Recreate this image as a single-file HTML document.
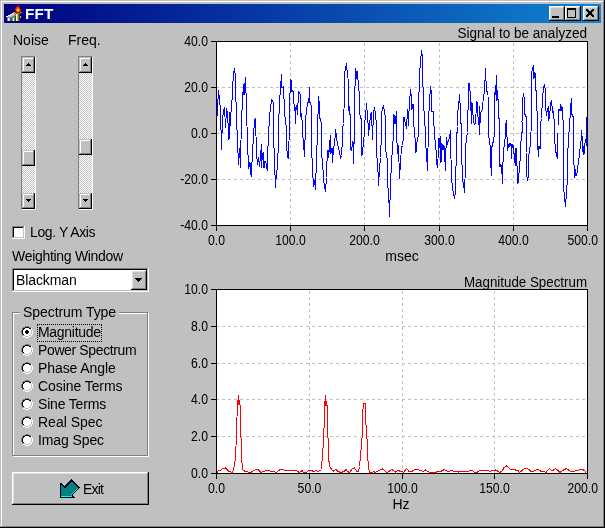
<!DOCTYPE html>
<html><head><meta charset="utf-8"><title>FFT</title>
<style>
html,body{margin:0;padding:0;background:#c0c0c0;}
body{width:605px;height:528px;position:relative;overflow:hidden;font-family:"Liberation Sans",sans-serif;font-size:14px;color:#000;}
.a{position:absolute;}
#root{position:absolute;left:0;top:0;width:605px;height:528px;will-change:transform;}
.t{position:absolute;white-space:nowrap;line-height:16px;height:16px;}
.win{position:absolute;left:0;top:0;width:605px;height:528px;box-sizing:border-box;background:#c0c0c0;
 box-shadow:inset -1px -1px 0 #000,inset 1px 1px 0 #c0c0c0,inset -2px -2px 0 #808080,inset 2px 2px 0 #fff;}
.title{position:absolute;left:4px;top:4px;width:597px;height:19px;background:linear-gradient(to right,#000080,#1084d0);}
.title .cap{position:absolute;left:21px;top:2px;color:#fff;font-weight:bold;font-size:14px;letter-spacing:0.2px;display:inline-block;transform:scaleX(1.09);transform-origin:0 0;line-height:16px;white-space:nowrap;}
.btn{position:absolute;box-sizing:border-box;background:#c0c0c0;
 box-shadow:inset -1px -1px 0 #000,inset 1px 1px 0 #fff,inset -2px -2px 0 #808080,inset 2px 2px 0 #dfdfdf;}
.sbtn{position:absolute;box-sizing:border-box;background:#c0c0c0;
 box-shadow:inset -1px -1px 0 #000,inset 1px 1px 0 #c0c0c0,inset -2px -2px 0 #808080,inset 2px 2px 0 #fff;}
.sb{position:absolute;width:15px;height:154px;box-sizing:border-box;border:1px solid;border-color:#808080 #fff #fff #808080;
 background-color:#c0c0c0;background-image:linear-gradient(45deg,#fff 25%,transparent 25%,transparent 75%,#fff 75%),linear-gradient(45deg,#fff 25%,transparent 25%,transparent 75%,#fff 75%);background-size:2px 2px;background-position:0 0,1px 1px;}
.sunk{position:absolute;box-sizing:border-box;background:#fff;
 box-shadow:inset -1px -1px 0 #fff,inset 1px 1px 0 #808080,inset -2px -2px 0 #c0c0c0,inset 2px 2px 0 #000;}
.grp{position:absolute;box-sizing:border-box;border:1px solid #808080;box-shadow:1px 1px 0 #fff, inset 1px 1px 0 #fff;}
.radio{position:absolute;width:12px;height:12px;}
svg{position:absolute;left:0;top:0;}
svg text{font-family:"Liberation Sans",sans-serif;font-size:14px;fill:#000;}
</style></head>
<body>
<div id="root">
<div class="win"></div>
<svg class="a" style="left:6px;top:5px;z-index:3" width="16" height="16" shape-rendering="crispEdges"><rect x="12" y="0" width="1" height="1" fill="#ff0000"/><rect x="11" y="1" width="2" height="1" fill="#ff0000"/><rect x="10" y="2" width="1" height="1" fill="#ff0000"/><rect x="11" y="2" width="1" height="1" fill="#ff8000"/><rect x="12" y="2" width="2" height="1" fill="#ff0000"/><rect x="9" y="3" width="2" height="1" fill="#ff0000"/><rect x="11" y="3" width="2" height="1" fill="#ff8000"/><rect x="13" y="3" width="1" height="1" fill="#ff0000"/><rect x="9" y="4" width="1" height="1" fill="#ff0000"/><rect x="10" y="4" width="1" height="1" fill="#ff8000"/><rect x="11" y="4" width="1" height="1" fill="#ffff00"/><rect x="12" y="4" width="2" height="1" fill="#ff8000"/><rect x="14" y="4" width="1" height="1" fill="#ff0000"/><rect x="9" y="5" width="1" height="1" fill="#ff0000"/><rect x="10" y="5" width="1" height="1" fill="#ff8000"/><rect x="11" y="5" width="2" height="1" fill="#ffff00"/><rect x="13" y="5" width="1" height="1" fill="#ff8000"/><rect x="14" y="5" width="1" height="1" fill="#ff0000"/><rect x="9" y="6" width="1" height="1" fill="#800000"/><rect x="10" y="6" width="1" height="1" fill="#ff0000"/><rect x="11" y="6" width="2" height="1" fill="#ff8000"/><rect x="13" y="6" width="1" height="1" fill="#ff0000"/><rect x="14" y="6" width="1" height="1" fill="#800000"/><rect x="7" y="7" width="1" height="1" fill="#808080"/><rect x="8" y="7" width="1" height="1" fill="#c0c080"/><rect x="9" y="7" width="2" height="1" fill="#800000"/><rect x="11" y="7" width="2" height="1" fill="#ff0000"/><rect x="13" y="7" width="1" height="1" fill="#800000"/><rect x="14" y="7" width="1" height="1" fill="#c0c080"/><rect x="15" y="7" width="1" height="1" fill="#808000"/><rect x="6" y="8" width="2" height="1" fill="#ffffff"/><rect x="8" y="8" width="1" height="1" fill="#808000"/><rect x="9" y="8" width="1" height="1" fill="#c0c080"/><rect x="10" y="8" width="4" height="1" fill="#808000"/><rect x="14" y="8" width="1" height="1" fill="#404000"/><rect x="4" y="9" width="2" height="1" fill="#ffffff"/><rect x="6" y="9" width="3" height="1" fill="#c0c0c0"/><rect x="9" y="9" width="1" height="1" fill="#808080"/><rect x="10" y="9" width="1" height="1" fill="#ffffff"/><rect x="11" y="9" width="1" height="1" fill="#c0c080"/><rect x="12" y="9" width="1" height="1" fill="#808000"/><rect x="13" y="9" width="1" height="1" fill="#404000"/><rect x="2" y="10" width="2" height="1" fill="#ffffff"/><rect x="4" y="10" width="4" height="1" fill="#c0c0c0"/><rect x="8" y="10" width="2" height="1" fill="#808080"/><rect x="10" y="10" width="1" height="1" fill="#ffffff"/><rect x="11" y="10" width="1" height="1" fill="#c0c080"/><rect x="12" y="10" width="1" height="1" fill="#808000"/><rect x="13" y="10" width="1" height="1" fill="#404000"/><rect x="0" y="11" width="2" height="1" fill="#ffffff"/><rect x="2" y="11" width="4" height="1" fill="#c0c0c0"/><rect x="6" y="11" width="3" height="1" fill="#808080"/><rect x="9" y="11" width="1" height="1" fill="#404000"/><rect x="10" y="11" width="1" height="1" fill="#ffffff"/><rect x="11" y="11" width="1" height="1" fill="#c0c080"/><rect x="12" y="11" width="1" height="1" fill="#808000"/><rect x="13" y="11" width="1" height="1" fill="#404000"/><rect x="14" y="11" width="1" height="1" fill="#c0c080"/><rect x="1" y="12" width="8" height="1" fill="#808080"/><rect x="9" y="12" width="1" height="1" fill="#404000"/><rect x="10" y="12" width="1" height="1" fill="#ffffff"/><rect x="11" y="12" width="1" height="1" fill="#c0c080"/><rect x="12" y="12" width="1" height="1" fill="#808000"/><rect x="13" y="12" width="1" height="1" fill="#404000"/><rect x="14" y="12" width="1" height="1" fill="#c0c080"/><rect x="1" y="13" width="1" height="1" fill="#808080"/><rect x="2" y="13" width="1" height="1" fill="#ffffff"/><rect x="3" y="13" width="1" height="1" fill="#c0c0c0"/><rect x="4" y="13" width="2" height="1" fill="#008080"/><rect x="6" y="13" width="1" height="1" fill="#40a0a0"/><rect x="7" y="13" width="1" height="1" fill="#ffffff"/><rect x="8" y="13" width="1" height="1" fill="#808080"/><rect x="9" y="13" width="1" height="1" fill="#404000"/><rect x="10" y="13" width="1" height="1" fill="#ffffff"/><rect x="11" y="13" width="1" height="1" fill="#c0c080"/><rect x="12" y="13" width="1" height="1" fill="#808000"/><rect x="13" y="13" width="1" height="1" fill="#404000"/><rect x="1" y="14" width="1" height="1" fill="#808080"/><rect x="2" y="14" width="1" height="1" fill="#ffffff"/><rect x="3" y="14" width="1" height="1" fill="#c0c0c0"/><rect x="4" y="14" width="2" height="1" fill="#008080"/><rect x="6" y="14" width="1" height="1" fill="#40a0a0"/><rect x="7" y="14" width="1" height="1" fill="#ffffff"/><rect x="8" y="14" width="1" height="1" fill="#808080"/><rect x="9" y="14" width="1" height="1" fill="#404000"/><rect x="10" y="14" width="1" height="1" fill="#ffffff"/><rect x="11" y="14" width="1" height="1" fill="#c0c080"/><rect x="12" y="14" width="1" height="1" fill="#808000"/><rect x="13" y="14" width="1" height="1" fill="#404000"/><rect x="1" y="15" width="1" height="1" fill="#808080"/><rect x="2" y="15" width="1" height="1" fill="#ffffff"/><rect x="3" y="15" width="1" height="1" fill="#c0c0c0"/><rect x="4" y="15" width="2" height="1" fill="#008080"/><rect x="6" y="15" width="1" height="1" fill="#40a0a0"/><rect x="7" y="15" width="1" height="1" fill="#ffffff"/><rect x="8" y="15" width="1" height="1" fill="#808080"/><rect x="9" y="15" width="1" height="1" fill="#404000"/><rect x="10" y="15" width="1" height="1" fill="#ffffff"/><rect x="11" y="15" width="1" height="1" fill="#c0c080"/><rect x="12" y="15" width="1" height="1" fill="#808000"/><rect x="13" y="15" width="1" height="1" fill="#404000"/></svg>
<div class="title"><span class="cap">FFT</span></div>
<div class="btn" style="left:549px;top:6px;width:16px;height:15px"><div class="a" style="left:3px;top:10px;width:7px;height:2px;background:#000"></div></div>
<div class="btn" style="left:565px;top:6px;width:16px;height:15px"><div class="a" style="left:2px;top:2px;width:9px;height:10px;box-sizing:border-box;border:1px solid #000;border-top-width:2px"></div></div>
<div class="btn" style="left:583px;top:6px;width:16px;height:15px"><svg width="16" height="15" shape-rendering="crispEdges"><rect x="3" y="3" width="2" height="1" fill="#000"/><rect x="9" y="3" width="2" height="1" fill="#000"/><rect x="3" y="4" width="3" height="1" fill="#000"/><rect x="8" y="4" width="3" height="1" fill="#000"/><rect x="4" y="5" width="6" height="1" fill="#000"/><rect x="5" y="6" width="4" height="1" fill="#000"/><rect x="5" y="7" width="4" height="1" fill="#000"/><rect x="4" y="8" width="6" height="1" fill="#000"/><rect x="3" y="9" width="3" height="1" fill="#000"/><rect x="8" y="9" width="3" height="1" fill="#000"/><rect x="3" y="10" width="2" height="1" fill="#000"/><rect x="9" y="10" width="2" height="1" fill="#000"/></svg></div>
<div class="t" id="tNoise" style="left:13px;top:32px;letter-spacing:0px;">Noise</div>
<div class="t" id="tFreq" style="left:68px;top:32px;letter-spacing:0px;">Freq.</div>
<div class="sb" style="left:21px;top:56px"></div><div class="sbtn" style="left:22px;top:57px;width:13px;height:16px"></div><div class="a" style="left:28px;top:63px;width:1px;height:1px;background:#000"></div><div class="a" style="left:27px;top:64px;width:3px;height:1px;background:#000"></div><div class="a" style="left:26px;top:65px;width:5px;height:1px;background:#000"></div><div class="sbtn" style="left:22px;top:150px;width:13px;height:16px"></div><div class="sbtn" style="left:22px;top:193px;width:13px;height:16px"></div><div class="a" style="left:26px;top:199px;width:5px;height:1px;background:#000"></div><div class="a" style="left:27px;top:200px;width:3px;height:1px;background:#000"></div><div class="a" style="left:28px;top:201px;width:1px;height:1px;background:#000"></div>
<div class="sb" style="left:78px;top:56px"></div><div class="sbtn" style="left:79px;top:57px;width:13px;height:16px"></div><div class="a" style="left:85px;top:63px;width:1px;height:1px;background:#000"></div><div class="a" style="left:84px;top:64px;width:3px;height:1px;background:#000"></div><div class="a" style="left:83px;top:65px;width:5px;height:1px;background:#000"></div><div class="sbtn" style="left:79px;top:139px;width:13px;height:16px"></div><div class="sbtn" style="left:79px;top:193px;width:13px;height:16px"></div><div class="a" style="left:83px;top:199px;width:5px;height:1px;background:#000"></div><div class="a" style="left:84px;top:200px;width:3px;height:1px;background:#000"></div><div class="a" style="left:85px;top:201px;width:1px;height:1px;background:#000"></div>
<div class="sunk" style="left:12px;top:226px;width:13px;height:13px"></div>
<div class="t" id="tLog" style="left:30px;top:224px;letter-spacing:-0.4px;">Log. Y Axis</div>
<div class="t" id="tWW" style="left:12px;top:248px;letter-spacing:-0.3px;">Weighting Window</div>
<div class="sunk" style="left:12px;top:268px;width:137px;height:24px"></div>
<div class="t" id="tBl" style="left:16px;top:272px;letter-spacing:-0.114px;">Blackman</div>
<div class="btn" style="left:131px;top:270px;width:16px;height:20px"></div><div class="a" style="left:135px;top:278px;width:7px;height:1px;background:#000"></div><div class="a" style="left:136px;top:279px;width:5px;height:1px;background:#000"></div><div class="a" style="left:137px;top:280px;width:3px;height:1px;background:#000"></div><div class="a" style="left:138px;top:281px;width:1px;height:1px;background:#000"></div>
<div class="grp" style="left:12px;top:312px;width:136px;height:144px"></div>
<div class="t" id="tST" style="left:20px;top:304px;letter-spacing:-0.067px;background:#c0c0c0;padding:0 3px;">Spectrum Type</div>
<svg class="radio" style="left:21px;top:326px" width="12" height="12" shape-rendering="crispEdges"><rect x="4" y="0" width="4" height="1" fill="#808080"/><rect x="2" y="1" width="2" height="1" fill="#808080"/><rect x="4" y="1" width="4" height="1" fill="#000"/><rect x="8" y="1" width="2" height="1" fill="#808080"/><rect x="1" y="2" width="1" height="1" fill="#808080"/><rect x="2" y="2" width="2" height="1" fill="#000"/><rect x="4" y="2" width="4" height="1" fill="#fff"/><rect x="8" y="2" width="2" height="1" fill="#000"/><rect x="10" y="2" width="1" height="1" fill="#fff"/><rect x="1" y="3" width="1" height="1" fill="#808080"/><rect x="2" y="3" width="1" height="1" fill="#000"/><rect x="3" y="3" width="6" height="1" fill="#fff"/><rect x="10" y="3" width="1" height="1" fill="#fff"/><rect x="0" y="4" width="1" height="1" fill="#808080"/><rect x="1" y="4" width="1" height="1" fill="#000"/><rect x="2" y="4" width="8" height="1" fill="#fff"/><rect x="11" y="4" width="1" height="1" fill="#fff"/><rect x="0" y="5" width="1" height="1" fill="#808080"/><rect x="1" y="5" width="1" height="1" fill="#000"/><rect x="2" y="5" width="8" height="1" fill="#fff"/><rect x="11" y="5" width="1" height="1" fill="#fff"/><rect x="0" y="6" width="1" height="1" fill="#808080"/><rect x="1" y="6" width="1" height="1" fill="#000"/><rect x="2" y="6" width="8" height="1" fill="#fff"/><rect x="11" y="6" width="1" height="1" fill="#fff"/><rect x="0" y="7" width="1" height="1" fill="#808080"/><rect x="1" y="7" width="1" height="1" fill="#000"/><rect x="2" y="7" width="8" height="1" fill="#fff"/><rect x="11" y="7" width="1" height="1" fill="#fff"/><rect x="1" y="8" width="1" height="1" fill="#808080"/><rect x="2" y="8" width="1" height="1" fill="#000"/><rect x="3" y="8" width="6" height="1" fill="#fff"/><rect x="10" y="8" width="1" height="1" fill="#fff"/><rect x="1" y="9" width="1" height="1" fill="#808080"/><rect x="4" y="9" width="4" height="1" fill="#fff"/><rect x="10" y="9" width="1" height="1" fill="#fff"/><rect x="2" y="10" width="2" height="1" fill="#fff"/><rect x="8" y="10" width="2" height="1" fill="#fff"/><rect x="4" y="11" width="4" height="1" fill="#fff"/><path d="M5 4h2v1h1v2h-1v1h-2v-1h-1v-2h1z" fill="#000"/></svg>
<div class="t" id="tR0" style="left:38px;top:324px;letter-spacing:-0.3px;">Magnitude</div>
<svg class="radio" style="left:21px;top:344px" width="12" height="12" shape-rendering="crispEdges"><rect x="4" y="0" width="4" height="1" fill="#808080"/><rect x="2" y="1" width="2" height="1" fill="#808080"/><rect x="4" y="1" width="4" height="1" fill="#000"/><rect x="8" y="1" width="2" height="1" fill="#808080"/><rect x="1" y="2" width="1" height="1" fill="#808080"/><rect x="2" y="2" width="2" height="1" fill="#000"/><rect x="4" y="2" width="4" height="1" fill="#fff"/><rect x="8" y="2" width="2" height="1" fill="#000"/><rect x="10" y="2" width="1" height="1" fill="#fff"/><rect x="1" y="3" width="1" height="1" fill="#808080"/><rect x="2" y="3" width="1" height="1" fill="#000"/><rect x="3" y="3" width="6" height="1" fill="#fff"/><rect x="10" y="3" width="1" height="1" fill="#fff"/><rect x="0" y="4" width="1" height="1" fill="#808080"/><rect x="1" y="4" width="1" height="1" fill="#000"/><rect x="2" y="4" width="8" height="1" fill="#fff"/><rect x="11" y="4" width="1" height="1" fill="#fff"/><rect x="0" y="5" width="1" height="1" fill="#808080"/><rect x="1" y="5" width="1" height="1" fill="#000"/><rect x="2" y="5" width="8" height="1" fill="#fff"/><rect x="11" y="5" width="1" height="1" fill="#fff"/><rect x="0" y="6" width="1" height="1" fill="#808080"/><rect x="1" y="6" width="1" height="1" fill="#000"/><rect x="2" y="6" width="8" height="1" fill="#fff"/><rect x="11" y="6" width="1" height="1" fill="#fff"/><rect x="0" y="7" width="1" height="1" fill="#808080"/><rect x="1" y="7" width="1" height="1" fill="#000"/><rect x="2" y="7" width="8" height="1" fill="#fff"/><rect x="11" y="7" width="1" height="1" fill="#fff"/><rect x="1" y="8" width="1" height="1" fill="#808080"/><rect x="2" y="8" width="1" height="1" fill="#000"/><rect x="3" y="8" width="6" height="1" fill="#fff"/><rect x="10" y="8" width="1" height="1" fill="#fff"/><rect x="1" y="9" width="1" height="1" fill="#808080"/><rect x="4" y="9" width="4" height="1" fill="#fff"/><rect x="10" y="9" width="1" height="1" fill="#fff"/><rect x="2" y="10" width="2" height="1" fill="#fff"/><rect x="8" y="10" width="2" height="1" fill="#fff"/><rect x="4" y="11" width="4" height="1" fill="#fff"/></svg>
<div class="t" id="tR1" style="left:38px;top:342px;letter-spacing:-0.37px;">Power Spectrum</div>
<svg class="radio" style="left:21px;top:362px" width="12" height="12" shape-rendering="crispEdges"><rect x="4" y="0" width="4" height="1" fill="#808080"/><rect x="2" y="1" width="2" height="1" fill="#808080"/><rect x="4" y="1" width="4" height="1" fill="#000"/><rect x="8" y="1" width="2" height="1" fill="#808080"/><rect x="1" y="2" width="1" height="1" fill="#808080"/><rect x="2" y="2" width="2" height="1" fill="#000"/><rect x="4" y="2" width="4" height="1" fill="#fff"/><rect x="8" y="2" width="2" height="1" fill="#000"/><rect x="10" y="2" width="1" height="1" fill="#fff"/><rect x="1" y="3" width="1" height="1" fill="#808080"/><rect x="2" y="3" width="1" height="1" fill="#000"/><rect x="3" y="3" width="6" height="1" fill="#fff"/><rect x="10" y="3" width="1" height="1" fill="#fff"/><rect x="0" y="4" width="1" height="1" fill="#808080"/><rect x="1" y="4" width="1" height="1" fill="#000"/><rect x="2" y="4" width="8" height="1" fill="#fff"/><rect x="11" y="4" width="1" height="1" fill="#fff"/><rect x="0" y="5" width="1" height="1" fill="#808080"/><rect x="1" y="5" width="1" height="1" fill="#000"/><rect x="2" y="5" width="8" height="1" fill="#fff"/><rect x="11" y="5" width="1" height="1" fill="#fff"/><rect x="0" y="6" width="1" height="1" fill="#808080"/><rect x="1" y="6" width="1" height="1" fill="#000"/><rect x="2" y="6" width="8" height="1" fill="#fff"/><rect x="11" y="6" width="1" height="1" fill="#fff"/><rect x="0" y="7" width="1" height="1" fill="#808080"/><rect x="1" y="7" width="1" height="1" fill="#000"/><rect x="2" y="7" width="8" height="1" fill="#fff"/><rect x="11" y="7" width="1" height="1" fill="#fff"/><rect x="1" y="8" width="1" height="1" fill="#808080"/><rect x="2" y="8" width="1" height="1" fill="#000"/><rect x="3" y="8" width="6" height="1" fill="#fff"/><rect x="10" y="8" width="1" height="1" fill="#fff"/><rect x="1" y="9" width="1" height="1" fill="#808080"/><rect x="4" y="9" width="4" height="1" fill="#fff"/><rect x="10" y="9" width="1" height="1" fill="#fff"/><rect x="2" y="10" width="2" height="1" fill="#fff"/><rect x="8" y="10" width="2" height="1" fill="#fff"/><rect x="4" y="11" width="4" height="1" fill="#fff"/></svg>
<div class="t" id="tR2" style="left:38px;top:360px;letter-spacing:-0.08px;">Phase Angle</div>
<svg class="radio" style="left:21px;top:380px" width="12" height="12" shape-rendering="crispEdges"><rect x="4" y="0" width="4" height="1" fill="#808080"/><rect x="2" y="1" width="2" height="1" fill="#808080"/><rect x="4" y="1" width="4" height="1" fill="#000"/><rect x="8" y="1" width="2" height="1" fill="#808080"/><rect x="1" y="2" width="1" height="1" fill="#808080"/><rect x="2" y="2" width="2" height="1" fill="#000"/><rect x="4" y="2" width="4" height="1" fill="#fff"/><rect x="8" y="2" width="2" height="1" fill="#000"/><rect x="10" y="2" width="1" height="1" fill="#fff"/><rect x="1" y="3" width="1" height="1" fill="#808080"/><rect x="2" y="3" width="1" height="1" fill="#000"/><rect x="3" y="3" width="6" height="1" fill="#fff"/><rect x="10" y="3" width="1" height="1" fill="#fff"/><rect x="0" y="4" width="1" height="1" fill="#808080"/><rect x="1" y="4" width="1" height="1" fill="#000"/><rect x="2" y="4" width="8" height="1" fill="#fff"/><rect x="11" y="4" width="1" height="1" fill="#fff"/><rect x="0" y="5" width="1" height="1" fill="#808080"/><rect x="1" y="5" width="1" height="1" fill="#000"/><rect x="2" y="5" width="8" height="1" fill="#fff"/><rect x="11" y="5" width="1" height="1" fill="#fff"/><rect x="0" y="6" width="1" height="1" fill="#808080"/><rect x="1" y="6" width="1" height="1" fill="#000"/><rect x="2" y="6" width="8" height="1" fill="#fff"/><rect x="11" y="6" width="1" height="1" fill="#fff"/><rect x="0" y="7" width="1" height="1" fill="#808080"/><rect x="1" y="7" width="1" height="1" fill="#000"/><rect x="2" y="7" width="8" height="1" fill="#fff"/><rect x="11" y="7" width="1" height="1" fill="#fff"/><rect x="1" y="8" width="1" height="1" fill="#808080"/><rect x="2" y="8" width="1" height="1" fill="#000"/><rect x="3" y="8" width="6" height="1" fill="#fff"/><rect x="10" y="8" width="1" height="1" fill="#fff"/><rect x="1" y="9" width="1" height="1" fill="#808080"/><rect x="4" y="9" width="4" height="1" fill="#fff"/><rect x="10" y="9" width="1" height="1" fill="#fff"/><rect x="2" y="10" width="2" height="1" fill="#fff"/><rect x="8" y="10" width="2" height="1" fill="#fff"/><rect x="4" y="11" width="4" height="1" fill="#fff"/></svg>
<div class="t" id="tR3" style="left:38px;top:378px;letter-spacing:-0.073px;">Cosine Terms</div>
<svg class="radio" style="left:21px;top:398px" width="12" height="12" shape-rendering="crispEdges"><rect x="4" y="0" width="4" height="1" fill="#808080"/><rect x="2" y="1" width="2" height="1" fill="#808080"/><rect x="4" y="1" width="4" height="1" fill="#000"/><rect x="8" y="1" width="2" height="1" fill="#808080"/><rect x="1" y="2" width="1" height="1" fill="#808080"/><rect x="2" y="2" width="2" height="1" fill="#000"/><rect x="4" y="2" width="4" height="1" fill="#fff"/><rect x="8" y="2" width="2" height="1" fill="#000"/><rect x="10" y="2" width="1" height="1" fill="#fff"/><rect x="1" y="3" width="1" height="1" fill="#808080"/><rect x="2" y="3" width="1" height="1" fill="#000"/><rect x="3" y="3" width="6" height="1" fill="#fff"/><rect x="10" y="3" width="1" height="1" fill="#fff"/><rect x="0" y="4" width="1" height="1" fill="#808080"/><rect x="1" y="4" width="1" height="1" fill="#000"/><rect x="2" y="4" width="8" height="1" fill="#fff"/><rect x="11" y="4" width="1" height="1" fill="#fff"/><rect x="0" y="5" width="1" height="1" fill="#808080"/><rect x="1" y="5" width="1" height="1" fill="#000"/><rect x="2" y="5" width="8" height="1" fill="#fff"/><rect x="11" y="5" width="1" height="1" fill="#fff"/><rect x="0" y="6" width="1" height="1" fill="#808080"/><rect x="1" y="6" width="1" height="1" fill="#000"/><rect x="2" y="6" width="8" height="1" fill="#fff"/><rect x="11" y="6" width="1" height="1" fill="#fff"/><rect x="0" y="7" width="1" height="1" fill="#808080"/><rect x="1" y="7" width="1" height="1" fill="#000"/><rect x="2" y="7" width="8" height="1" fill="#fff"/><rect x="11" y="7" width="1" height="1" fill="#fff"/><rect x="1" y="8" width="1" height="1" fill="#808080"/><rect x="2" y="8" width="1" height="1" fill="#000"/><rect x="3" y="8" width="6" height="1" fill="#fff"/><rect x="10" y="8" width="1" height="1" fill="#fff"/><rect x="1" y="9" width="1" height="1" fill="#808080"/><rect x="4" y="9" width="4" height="1" fill="#fff"/><rect x="10" y="9" width="1" height="1" fill="#fff"/><rect x="2" y="10" width="2" height="1" fill="#fff"/><rect x="8" y="10" width="2" height="1" fill="#fff"/><rect x="4" y="11" width="4" height="1" fill="#fff"/></svg>
<div class="t" id="tR4" style="left:38px;top:396px;letter-spacing:-0.178px;">Sine Terms</div>
<svg class="radio" style="left:21px;top:416px" width="12" height="12" shape-rendering="crispEdges"><rect x="4" y="0" width="4" height="1" fill="#808080"/><rect x="2" y="1" width="2" height="1" fill="#808080"/><rect x="4" y="1" width="4" height="1" fill="#000"/><rect x="8" y="1" width="2" height="1" fill="#808080"/><rect x="1" y="2" width="1" height="1" fill="#808080"/><rect x="2" y="2" width="2" height="1" fill="#000"/><rect x="4" y="2" width="4" height="1" fill="#fff"/><rect x="8" y="2" width="2" height="1" fill="#000"/><rect x="10" y="2" width="1" height="1" fill="#fff"/><rect x="1" y="3" width="1" height="1" fill="#808080"/><rect x="2" y="3" width="1" height="1" fill="#000"/><rect x="3" y="3" width="6" height="1" fill="#fff"/><rect x="10" y="3" width="1" height="1" fill="#fff"/><rect x="0" y="4" width="1" height="1" fill="#808080"/><rect x="1" y="4" width="1" height="1" fill="#000"/><rect x="2" y="4" width="8" height="1" fill="#fff"/><rect x="11" y="4" width="1" height="1" fill="#fff"/><rect x="0" y="5" width="1" height="1" fill="#808080"/><rect x="1" y="5" width="1" height="1" fill="#000"/><rect x="2" y="5" width="8" height="1" fill="#fff"/><rect x="11" y="5" width="1" height="1" fill="#fff"/><rect x="0" y="6" width="1" height="1" fill="#808080"/><rect x="1" y="6" width="1" height="1" fill="#000"/><rect x="2" y="6" width="8" height="1" fill="#fff"/><rect x="11" y="6" width="1" height="1" fill="#fff"/><rect x="0" y="7" width="1" height="1" fill="#808080"/><rect x="1" y="7" width="1" height="1" fill="#000"/><rect x="2" y="7" width="8" height="1" fill="#fff"/><rect x="11" y="7" width="1" height="1" fill="#fff"/><rect x="1" y="8" width="1" height="1" fill="#808080"/><rect x="2" y="8" width="1" height="1" fill="#000"/><rect x="3" y="8" width="6" height="1" fill="#fff"/><rect x="10" y="8" width="1" height="1" fill="#fff"/><rect x="1" y="9" width="1" height="1" fill="#808080"/><rect x="4" y="9" width="4" height="1" fill="#fff"/><rect x="10" y="9" width="1" height="1" fill="#fff"/><rect x="2" y="10" width="2" height="1" fill="#fff"/><rect x="8" y="10" width="2" height="1" fill="#fff"/><rect x="4" y="11" width="4" height="1" fill="#fff"/></svg>
<div class="t" id="tR5" style="left:38px;top:414px;letter-spacing:0px;">Real Spec</div>
<svg class="radio" style="left:21px;top:434px" width="12" height="12" shape-rendering="crispEdges"><rect x="4" y="0" width="4" height="1" fill="#808080"/><rect x="2" y="1" width="2" height="1" fill="#808080"/><rect x="4" y="1" width="4" height="1" fill="#000"/><rect x="8" y="1" width="2" height="1" fill="#808080"/><rect x="1" y="2" width="1" height="1" fill="#808080"/><rect x="2" y="2" width="2" height="1" fill="#000"/><rect x="4" y="2" width="4" height="1" fill="#fff"/><rect x="8" y="2" width="2" height="1" fill="#000"/><rect x="10" y="2" width="1" height="1" fill="#fff"/><rect x="1" y="3" width="1" height="1" fill="#808080"/><rect x="2" y="3" width="1" height="1" fill="#000"/><rect x="3" y="3" width="6" height="1" fill="#fff"/><rect x="10" y="3" width="1" height="1" fill="#fff"/><rect x="0" y="4" width="1" height="1" fill="#808080"/><rect x="1" y="4" width="1" height="1" fill="#000"/><rect x="2" y="4" width="8" height="1" fill="#fff"/><rect x="11" y="4" width="1" height="1" fill="#fff"/><rect x="0" y="5" width="1" height="1" fill="#808080"/><rect x="1" y="5" width="1" height="1" fill="#000"/><rect x="2" y="5" width="8" height="1" fill="#fff"/><rect x="11" y="5" width="1" height="1" fill="#fff"/><rect x="0" y="6" width="1" height="1" fill="#808080"/><rect x="1" y="6" width="1" height="1" fill="#000"/><rect x="2" y="6" width="8" height="1" fill="#fff"/><rect x="11" y="6" width="1" height="1" fill="#fff"/><rect x="0" y="7" width="1" height="1" fill="#808080"/><rect x="1" y="7" width="1" height="1" fill="#000"/><rect x="2" y="7" width="8" height="1" fill="#fff"/><rect x="11" y="7" width="1" height="1" fill="#fff"/><rect x="1" y="8" width="1" height="1" fill="#808080"/><rect x="2" y="8" width="1" height="1" fill="#000"/><rect x="3" y="8" width="6" height="1" fill="#fff"/><rect x="10" y="8" width="1" height="1" fill="#fff"/><rect x="1" y="9" width="1" height="1" fill="#808080"/><rect x="4" y="9" width="4" height="1" fill="#fff"/><rect x="10" y="9" width="1" height="1" fill="#fff"/><rect x="2" y="10" width="2" height="1" fill="#fff"/><rect x="8" y="10" width="2" height="1" fill="#fff"/><rect x="4" y="11" width="4" height="1" fill="#fff"/></svg>
<div class="t" id="tR6" style="left:38px;top:432px;letter-spacing:-0.1px;">Imag Spec</div>
<div class="a" style="left:37px;top:324px;width:65px;height:18px;box-sizing:border-box;border:1px dotted #000"></div>
<div class="btn" style="left:12px;top:472px;width:137px;height:33px"></div>
<svg class="a" style="left:58px;top:477px" width="24" height="23" shape-rendering="crispEdges"><polygon points="2,6 3,6 6.5,9.5 13.5,2 22,10.5 14.5,18 17,20.5 17,21 2,21" fill="#000"/><polygon points="3,8 6.5,11.5 13.5,4.5 19.5,10.5 12.5,17.5 14,19 3,19" fill="#008080"/><polyline points="3.5,7.5 6.5,10.5 13.5,3.5" fill="none" stroke="#000080" stroke-width="1.4"/><polyline points="3,19.5 13.5,19.5" fill="none" stroke="#00ffff" stroke-width="1"/><polyline points="12.5,18.5 20,11" fill="none" stroke="#00ffff" stroke-width="1.4"/></svg>
<div class="t" id="tExit" style="left:83px;top:481px;letter-spacing:-0.8px;">Exit</div>
<svg width="605" height="528" viewBox="0 0 605 528">
<g shape-rendering="crispEdges">
<rect x="216" y="41" width="372" height="185" fill="#000"/>
<rect x="217" y="42" width="370" height="183" fill="#fff"/>
<line x1="290.5" y1="43" x2="290.5" y2="225" stroke="#c0c0c0" stroke-width="1" stroke-dasharray="3 3"/>
<line x1="364.5" y1="43" x2="364.5" y2="225" stroke="#c0c0c0" stroke-width="1" stroke-dasharray="3 3"/>
<line x1="439.5" y1="43" x2="439.5" y2="225" stroke="#c0c0c0" stroke-width="1" stroke-dasharray="3 3"/>
<line x1="513.5" y1="43" x2="513.5" y2="225" stroke="#c0c0c0" stroke-width="1" stroke-dasharray="3 3"/>
<line x1="216" y1="87.5" x2="587" y2="87.5" stroke="#c0c0c0" stroke-width="1" stroke-dasharray="3 3"/>
<line x1="216" y1="133.5" x2="587" y2="133.5" stroke="#c0c0c0" stroke-width="1" stroke-dasharray="3 3"/>
<line x1="216" y1="179.5" x2="587" y2="179.5" stroke="#c0c0c0" stroke-width="1" stroke-dasharray="3 3"/>
<rect x="216" y="41" width="1" height="185" fill="#000"/>
<rect x="216" y="226" width="1" height="5" fill="#000"/>
<rect x="290" y="226" width="1" height="5" fill="#000"/>
<rect x="364" y="226" width="1" height="5" fill="#000"/>
<rect x="439" y="226" width="1" height="5" fill="#000"/>
<rect x="513" y="226" width="1" height="5" fill="#000"/>
<rect x="587" y="226" width="1" height="5" fill="#000"/>
<rect x="211" y="41" width="5" height="1" fill="#000"/>
<rect x="211" y="87" width="5" height="1" fill="#000"/>
<rect x="211" y="133" width="5" height="1" fill="#000"/>
<rect x="211" y="179" width="5" height="1" fill="#000"/>
<rect x="211" y="225" width="5" height="1" fill="#000"/>
<rect x="216" y="289" width="372" height="185" fill="#000"/>
<rect x="217" y="290" width="370" height="183" fill="#fff"/>
<line x1="309.5" y1="291" x2="309.5" y2="473" stroke="#c0c0c0" stroke-width="1" stroke-dasharray="3 3"/>
<line x1="402.5" y1="291" x2="402.5" y2="473" stroke="#c0c0c0" stroke-width="1" stroke-dasharray="3 3"/>
<line x1="494.5" y1="291" x2="494.5" y2="473" stroke="#c0c0c0" stroke-width="1" stroke-dasharray="3 3"/>
<line x1="216" y1="326.5" x2="587" y2="326.5" stroke="#c0c0c0" stroke-width="1" stroke-dasharray="3 3"/>
<line x1="216" y1="363.5" x2="587" y2="363.5" stroke="#c0c0c0" stroke-width="1" stroke-dasharray="3 3"/>
<line x1="216" y1="399.5" x2="587" y2="399.5" stroke="#c0c0c0" stroke-width="1" stroke-dasharray="3 3"/>
<line x1="216" y1="436.5" x2="587" y2="436.5" stroke="#c0c0c0" stroke-width="1" stroke-dasharray="3 3"/>
<rect x="216" y="289" width="1" height="185" fill="#000"/>
<rect x="216" y="474" width="1" height="5" fill="#000"/>
<rect x="309" y="474" width="1" height="5" fill="#000"/>
<rect x="402" y="474" width="1" height="5" fill="#000"/>
<rect x="494" y="474" width="1" height="5" fill="#000"/>
<rect x="587" y="474" width="1" height="5" fill="#000"/>
<rect x="211" y="289" width="5" height="1" fill="#000"/>
<rect x="211" y="326" width="5" height="1" fill="#000"/>
<rect x="211" y="363" width="5" height="1" fill="#000"/>
<rect x="211" y="399" width="5" height="1" fill="#000"/>
<rect x="211" y="436" width="5" height="1" fill="#000"/>
<rect x="211" y="473" width="5" height="1" fill="#000"/>
</g>
<polyline shape-rendering="crispEdges" fill="none" stroke="#0000ff" stroke-width="1" points="217,116.5 218.5,90.5 219.5,100 220.5,109.5 221.5,149.5 222.5,119 223.5,112 224.5,107 225.5,127.5 226.5,108.5 227.5,114 229,140 229.5,112 230,126 231,112 232,100 232.5,88.5 233.5,73 234.5,68.5 235.5,76.5 235.5,102 236,101 236.5,117.5 237.5,141 238.5,164.5 239.5,148 240.5,168 241.5,112 242,110.5 242.5,100 243.5,84.5 244,95 244.5,89 245.5,77 246,92.5 246.5,112 248.5,169 250,162.5 250.5,173 251.5,176.5 252,162.5 253,144.5 254.5,120.5 255.5,118 256.5,153.5 257.5,164.5 258.5,157.5 259.5,166.5 260.5,156.5 261.5,144.5 261.5,168 262.5,153.5 263.5,152.5 264,168 265,161 266,162.5 266.5,168 267.5,170.5 268,146.5 269.5,116.5 270.5,108 271.5,100 273,102 273,135.5 274,148 275.5,188 276.5,171 277.5,169 278.5,137.5 279,114.5 280,95 281.5,74 282,88 283.5,87 284,98.5 285,116.5 286.5,129 286.5,144.5 287.5,157.5 288.5,158.5 289,141 289.5,128 290,93.5 291,79.5 292,91.5 293,90.5 293.5,100.5 295,111 295.5,123.5 296,107.5 296.5,105 297.5,114.5 298.5,91.5 300,93.5 300.5,116.5 301.5,114.5 302.5,125.5 303,137.5 304.5,156.5 305,141 305.5,118.5 307,107.5 308,102.5 309,98.5 309.5,87 310,102.5 311,105 311,133.5 312,157.5 313,178 313.5,186.5 314.5,180 315.5,189.5 316.5,157.5 317.5,133.5 318,114.5 318.5,96 319.5,106 320,118.5 321,122 321.5,127 322,157.5 323.5,175.5 324,182.5 325.5,191.5 326.5,177.5 327,161 328,150 328.5,158 329.5,145.5 330.5,135.5 331,153.5 332,148 332.5,162.5 333.5,147.5 334,146.5 335,138 335.5,129 337,141 338.5,148 339.5,152.5 340.5,157.5 341.5,155.5 342.5,139 342.5,129 343.5,123.5 344.5,95 345,71 346.5,63 347.5,76.5 348,77.5 348.5,111 349,106 350,114.5 350,133.5 350.5,148 351.5,151 352.5,142.5 353,141 353.5,163.5 354,144.5 354.5,133.5 354.5,105 355.5,68 356.5,78.5 357,71 358,80 359,90.5 359.5,113 361,118.5 361,133.5 361,148 362,155.5 362.5,152 364,137.5 364.5,132.5 364.5,123.5 365.5,116.5 366.5,103 367.5,116.5 368.5,129 368.5,135.5 370.5,114.5 371.5,112 372,125.5 372.5,140 373.5,111 374.5,108.5 375.5,113 376.5,127 376.5,133.5 377,157.5 378,172 378.5,185.5 379.5,169 380.5,157.5 381.5,133.5 381.5,122 382,111 383.5,105.5 384.5,113 385,114.5 385.5,133.5 386,152 387,157.5 388,188 388.5,190 389.5,216.5 390.5,184.5 391.5,162.5 392.5,148 393.5,133.5 393.5,117.5 394,114.5 395,124 395.5,122 396.5,111 397,142.5 398,153.5 398.5,145.5 399.5,178.5 400.5,162 401.5,147.5 402.5,145.5 403.5,137.5 404,117.5 405.5,123.5 406.5,129 407.5,109.5 408.5,125.5 409,111 410.5,89 411.5,98.5 412,109.5 413,104 414,127 414.5,133.5 415.5,142.5 416,152.5 417,142.5 418,137.5 418.5,116.5 419.5,69.5 420,68.5 421.5,50 422.5,58 423,87 424,111 425.5,133.5 426,148 426.5,152.5 427.5,171 428,148 428.5,132.5 429,111 430.5,86.5 431.5,93.5 432,111 433,111 434,125.5 434.5,135.5 435.5,144.5 436,150 437,164.5 437.5,167.5 438.5,150 439,138 440,148 440.5,136.5 441,162.5 442,143.5 443,150 444,145.5 444.5,153.5 445.5,170.5 446,148 446.5,137.5 447.5,144.5 448.5,140 449.5,137.5 450,134.5 450.5,130 451,159 451.5,177.5 452.5,188 453.5,193.5 454.5,198.5 455.5,192 456,166.5 456.5,148 457,132.5 457,126.5 457.5,111 458.5,108.5 459.5,94 460.5,111 461,123.5 461,133.5 461.5,148 462.5,181 463.5,182.5 464.5,192.5 465,179 465.5,148 466.5,137.5 467.5,132.5 468,111 468.5,83 469.5,83 470.5,98.5 471.5,123.5 472,102.5 472.5,107.5 473.5,122 474.5,124.5 475.5,123.5 476.5,104 477,101.5 478,116.5 479,124.5 479.5,134.5 479.5,106.5 480,123.5 480.5,113 481.5,111 482.5,108.5 483.5,95 484.5,92.5 485.5,68 486,81 487,91.5 488,95 488.5,127 488.5,132.5 489,137.5 490,144.5 490.5,160 491.5,175.5 492,146.5 493,142.5 494,137.5 494.5,132.5 494.5,92.5 495.5,95 496.5,75 497,100.5 497.5,90.5 498.5,107.5 499.5,129 499.5,132.5 499.5,157.5 500,166.5 501,164.5 502,173.5 502.5,183.5 503,162.5 503.5,148 504.5,146.5 505.5,132.5 505.5,125.5 506.5,120 506.5,132.5 507.5,141 507.5,151 508,144.5 509,147.5 510,143.5 511,145.5 511.5,159 512,144.5 513,148 513.5,145.5 514.5,161 515.5,165.5 516,148 516.5,152 517.5,179 518,183.5 519,173.5 520,161 521,141 522,132.5 522,122 522.5,101.5 523.5,93 524.5,100.5 525,114.5 526,116.5 526,132.5 526,152 526.5,172 527.5,181 528,179 528.5,161 529.5,148 530.5,147.5 531,132.5 531.5,95 532,71 533.5,65.5 534,78.5 535,72 535.5,90 536.5,90.5 537,111 537.5,114.5 537.5,132.5 537.5,143.5 538.5,156.5 539,146.5 540,149 540.5,132.5 540.5,123.5 541.5,118.5 542.5,98.5 543.5,87 544.5,85 545.5,91.5 546,111 546.5,115.5 547.5,109.5 548.5,106 548.5,120 549.5,118.5 550.5,104 551.5,100 552.5,112 553,111 554,118.5 554.5,132.5 555,143.5 556,152.5 556.5,154.5 557.5,159 558,133.5 558,125.5 559,109.5 560,111 560.5,104 561.5,110.5 562,106.5 563,120 563,132.5 563.5,175.5 564,192 565.5,206.5 566.5,192 567.5,179 568,148 569,132.5 569.5,129 570.5,108.5 571.5,98 572,114.5 573,116.5 573,132.5 573.5,152 574.5,177.5 575.5,169 576,175.5 577,173.5 577.5,169 578.5,161 579.5,155.5 580.5,142.5 581,141 581.5,130 582,135.5 582.5,152 583.5,146.5 584,154.5 584.5,146.5 585.5,139 586.5,145.5 586.5,117"/>
<polyline shape-rendering="crispEdges" fill="none" stroke="#ff0000" stroke-width="1" points="217,472.5 218.5,470 221,470 223,468.5 225.5,468 227.5,470 229,472 230.5,471.5 232,472.5 233.5,470 235,461 236,446 236.5,428 237.5,406 238.5,395 239,405 239.5,400 240.5,410 241,438 242,463 243,470 245,471.5 248,472 251.5,472 255,470 257.5,469.5 259.5,470.5 260.5,472.5 264,471.5 266.5,470.5 269,470.5 271.5,471.5 275,472 276.5,472.5 280,469.5 282.5,469.5 285,470.5 288,470.5 296.5,470.5 299,472.5 301,471.5 302,470.5 303.5,472.5 307.5,472 308.5,470.5 310,470 312.5,471 314,472 316,470.5 317.5,471.5 320,470.5 321.5,469.5 322,461.5 323,448 324,429 324.5,406.5 325.5,395.5 326,406 326.5,401 327.5,408 328,438 329,461.5 330,467 332,470 333.5,471 336,469.5 337.5,471 339.5,472 342.5,472 344.5,471 346,469.5 347.5,471.5 349.5,472.5 352,469 354.5,468 355.5,469.5 357,471.5 358.5,471.5 359.5,466.5 360.5,456.5 362,438.5 362.5,415 363.5,403.5 365.5,403.5 366,425 367,438.5 367.5,455 368.5,466.5 369.5,472.5 372,472.5 374,471.5 375,472.5 377.5,471.5 380,470 382.5,469 384,470 386,472 387.5,472.5 390,470.5 392,469.5 394,471 395.5,472 397.5,470.5 399.5,471 402,471.5 403.5,472.5 406.5,468.5 409,471.5 411,472 414,470 416,469.5 418.5,470 421.5,470.5 423,471.5 425.5,470 428,471.5 430.5,472.5 433,472 435.5,472.5 437.5,471.5 441.5,471 444.5,469.5 446.5,471 449,471.5 450.5,470.5 453,471 456,471.5 458.5,472 461,471.5 463.5,471.5 466,472 468.5,471.5 471,470 473.5,471.5 475,472.5 477.5,472 480,470.5 482.5,470 485,470 488.5,470.5 490,472 491.5,470.5 494,470.5 495.5,470 497.5,471 500,472.5 502.5,470.5 504,467.5 506.5,466 508.5,467.5 510.5,469.5 513,469 515.5,470 518,470 519.5,472.5 522,470.5 524.5,468.5 527,468.5 529.5,470 531,471.5 533.5,471.5 536,470 538.5,469.5 540.5,471 543.5,471.5 546,472.5 547.5,470.5 549.5,468.5 551.5,470.5 553.5,470 555.5,468.5 557.5,470 560,472.5 562.5,470.5 564.5,469.5 566.5,468.5 568.5,470 571,471.5 574,471.5 576.5,470.5 579,470 581,469.5 583.5,470 585,471 586,472.5"/>
<text x="587" y="38" text-anchor="end" id="tc1" textLength="129.5" lengthAdjust="spacingAndGlyphs">Signal to be analyzed</text>
<text x="587" y="287" text-anchor="end" id="tc2" textLength="123" lengthAdjust="spacingAndGlyphs">Magnitude Spectrum</text>
<text x="216.5" y="245" text-anchor="middle" textLength="17.0" lengthAdjust="spacingAndGlyphs">0.0</text>
<text x="290.5" y="245" text-anchor="middle" textLength="30.599999999999998" lengthAdjust="spacingAndGlyphs">100.0</text>
<text x="364.5" y="245" text-anchor="middle" textLength="30.599999999999998" lengthAdjust="spacingAndGlyphs">200.0</text>
<text x="439.5" y="245" text-anchor="middle" textLength="30.599999999999998" lengthAdjust="spacingAndGlyphs">300.0</text>
<text x="513.5" y="245" text-anchor="middle" textLength="30.599999999999998" lengthAdjust="spacingAndGlyphs">400.0</text>
<text x="598" y="245" text-anchor="end" textLength="30.599999999999998" lengthAdjust="spacingAndGlyphs">500.0</text>
<text x="208" y="46" text-anchor="end" textLength="23.8" lengthAdjust="spacingAndGlyphs">40.0</text>
<text x="208" y="92" text-anchor="end" textLength="23.8" lengthAdjust="spacingAndGlyphs">20.0</text>
<text x="208" y="138" text-anchor="end" textLength="17.0" lengthAdjust="spacingAndGlyphs">0.0</text>
<text x="208" y="184" text-anchor="end" textLength="27.8" lengthAdjust="spacingAndGlyphs">-20.0</text>
<text x="208" y="230" text-anchor="end" textLength="27.8" lengthAdjust="spacingAndGlyphs">-40.0</text>
<text x="402" y="261" text-anchor="middle">msec</text>
<text x="216.5" y="493" text-anchor="middle" textLength="17.0" lengthAdjust="spacingAndGlyphs">0.0</text>
<text x="309.5" y="493" text-anchor="middle" textLength="23.8" lengthAdjust="spacingAndGlyphs">50.0</text>
<text x="402.5" y="493" text-anchor="middle" textLength="30.599999999999998" lengthAdjust="spacingAndGlyphs">100.0</text>
<text x="494.5" y="493" text-anchor="middle" textLength="30.599999999999998" lengthAdjust="spacingAndGlyphs">150.0</text>
<text x="598" y="493" text-anchor="end" textLength="30.599999999999998" lengthAdjust="spacingAndGlyphs">200.0</text>
<text x="208" y="294" text-anchor="end" textLength="23.8" lengthAdjust="spacingAndGlyphs">10.0</text>
<text x="208" y="331" text-anchor="end" textLength="17.0" lengthAdjust="spacingAndGlyphs">8.0</text>
<text x="208" y="368" text-anchor="end" textLength="17.0" lengthAdjust="spacingAndGlyphs">6.0</text>
<text x="208" y="404" text-anchor="end" textLength="17.0" lengthAdjust="spacingAndGlyphs">4.0</text>
<text x="208" y="441" text-anchor="end" textLength="17.0" lengthAdjust="spacingAndGlyphs">2.0</text>
<text x="208" y="478" text-anchor="end" textLength="17.0" lengthAdjust="spacingAndGlyphs">0.0</text>
<text x="401" y="509" text-anchor="middle">Hz</text>
</svg>
</div>
</body></html>
